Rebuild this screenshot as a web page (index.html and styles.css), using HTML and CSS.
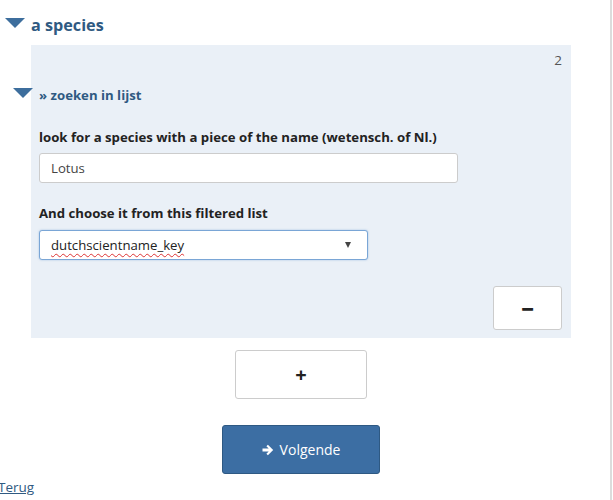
FILE: index.html
```html
<!DOCTYPE html>
<html>
<head>
<meta charset="utf-8">
<link rel="stylesheet" href="styles.css">
</head>
<body>
<div class="page">
  <div class="section-head">
    <span class="tri tri-lg"></span>
    <h2 class="section-title">a species</h2>
  </div>
  <div class="panel">
    <div class="panel-num">2</div>
    <div class="sub-head">
      <span class="tri tri-sm"></span>
      <span class="sub-title">» zoeken in lijst</span>
    </div>
    <div class="panel-body">
      <label class="field-label">look for a species with a piece of the name (wetensch. of Nl.)</label>
      <div class="input text-input">Lotus</div>
      <label class="field-label second">And choose it from this filtered list</label>
      <div class="input select-input"><span class="spell">dutchscientname_key</span><span class="caret"></span></div>
    </div>
    <div class="panel-actions">
      <button class="btn btn-minus">−</button>
    </div>
  </div>
  <div class="center-row plus-row">
    <button class="btn btn-plus">+</button>
  </div>
  <div class="center-row next-row">
    <button class="btn-primary"><svg class="arrow" viewBox="0 0 12 12" width="12" height="12"><path d="M0.5 4.6h6.2L4.4 2.3 5.9 0.8 11.2 6 5.9 11.2 4.4 9.7 6.7 7.4H0.5z" fill="#fff"/></svg>Volgende</button>
  </div>
  <a class="back-link" href="#">Terug</a>
  <div class="edge"></div>
</div>
</body>
</html>
```
FILE: styles.css
```css
html, body {
  margin: 0;
  padding: 0;
  background: #fff;
}
body {
  font-family: "Open Sans", "Noto Sans", sans-serif;
  color: #222;
}
.page {
  position: relative;
  width: 613px;
  height: 500px;
  overflow: hidden;
}
.section-head {
  display: flex;
  align-items: center;
  gap: 6px;
  padding: 12px 0 0 5px;
  height: 26px;
}
.tri {
  display: inline-block;
  width: 0;
  height: 0;
  border-left: 10px solid transparent;
  border-right: 10px solid transparent;
  border-top: 10px solid #3d6e9d;
}
.tri-lg { margin-top: -4px; }
.section-title {
  margin: 0;
  font-size: 16.2px;
  font-weight: 700;
  color: #2f5a82;
  line-height: 24px;
}
.panel {
  margin: 7px 0 0 31px;
  width: 540px;
  height: 293px;
  background: #eaf0f7;
  display: flex;
  flex-direction: column;
  box-sizing: border-box;
}
.panel-num {
  align-self: flex-end;
  padding: 6px 9px 0 0;
  font-size: 13.5px;
  color: #555;
  line-height: 18px;
}
.sub-head {
  display: flex;
  align-items: center;
  gap: 6px;
  margin: 16px 0 0 -18px;
}
.tri-sm { margin-top: -5px; }
.sub-title {
  font-size: 13.2px;
  font-weight: 700;
  color: #2f5a82;
  line-height: 20px;
}
.panel-body {
  display: flex;
  flex-direction: column;
  padding: 0 8px;
  margin-top: 22px;
}
.field-label {
  font-size: 13.2px;
  font-weight: 700;
  color: #222;
  line-height: 20px;
}
.field-label.second { margin-top: 20px; }
.input {
  box-sizing: border-box;
  height: 30px;
  background: #fff;
  border: 1px solid #ccc;
  border-radius: 3px;
  font-size: 13.2px;
  color: #444;
  padding: 0 11px;
  display: flex;
  align-items: center;
  margin-top: 6px;
}
.text-input { width: 419px; }
.select-input {
  width: 329px;
  border-color: #7aa6d6;
  box-shadow: 0 0 2px rgba(102,155,210,0.6);
  justify-content: space-between;
  color: #222;
  margin-top: 7px;
}
.spell {
  text-decoration: underline wavy #d33;
  text-decoration-thickness: 1px;
  text-underline-offset: 3px;
}
.caret {
  width: 0;
  height: 0;
  border-left: 3.5px solid transparent;
  border-right: 3.5px solid transparent;
  border-top: 6px solid #444;
  margin-right: 5px;
}
.panel-actions {
  display: flex;
  justify-content: flex-end;
  padding: 26px 9px 0 0;
}
.btn {
  box-sizing: border-box;
  background: #fff;
  border: 1px solid #ccc;
  border-radius: 3px;
  font-family: "Open Sans", sans-serif;
  font-weight: 700;
  color: #222;
  cursor: pointer;
}
.btn-minus {
  width: 69px;
  height: 44px;
  font-size: 22px;
  font-weight: 800;
  line-height: 1;
}
.center-row {
  display: flex;
  justify-content: center;
  width: 540px;
  margin-left: 31px;
}
.btn-plus {
  width: 132px;
  height: 49px;
  font-size: 20px;
  margin-top: 12px;
}
.next-row { margin-top: 26px; }
.btn-primary {
  box-sizing: border-box;
  width: 158px;
  height: 49px;
  background: #3c6ea3;
  border: 1px solid #2e5983;
  border-radius: 3px;
  color: #fff;
  font-family: "Open Sans", sans-serif;
  font-size: 14px;
  display: flex;
  align-items: center;
  justify-content: center;
  gap: 6px;
}
.arrow { display: block; }
.back-link {
  display: block;
  margin: 3px 0 0 -2px;
  font-size: 13.5px;
  color: #2f5a82;
  text-decoration: underline;
  line-height: 20px;
}
.edge {
  position: absolute;
  top: 0;
  right: 1px;
  width: 2px;
  height: 500px;
  background: #dcdcdc;
}
```
